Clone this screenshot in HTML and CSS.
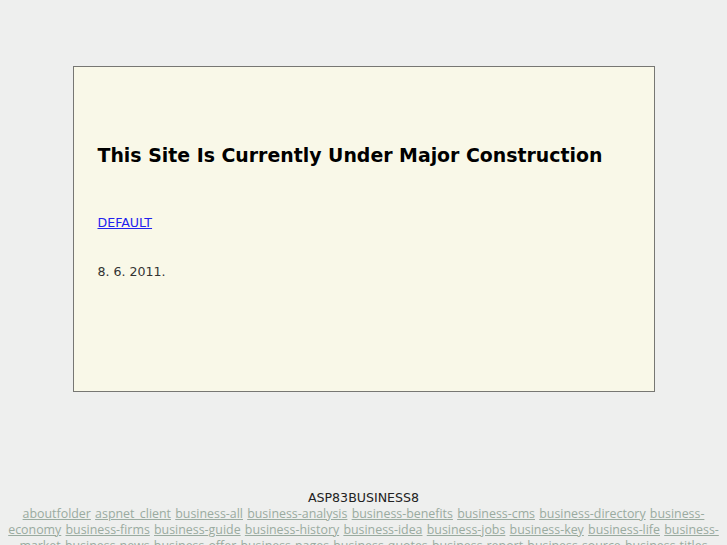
FILE: index.html
```html
<!DOCTYPE html>
<html lang="en">
<head>
    <meta charset="UTF-8">
    <title>ASP83BUSINESS8</title>
    <link rel="stylesheet" href="styles.css">
</head>
<body>
    <div id="box">
        <h1>This Site Is Currently Under Major Construction</h1>
        <p class="link"><a href="#">DEFAULT</a></p>
        <p class="date">8. 6. 2011.</p>
    </div>
    <div id="footer">
        <div class="site">ASP83BUSINESS8</div>
        <div class="folders">
            <a href="#">aboutfolder</a> <a href="#">aspnet_client</a> <a href="#">business-all</a> <a href="#">business-analysis</a> <a href="#">business-benefits</a> <a href="#">business-cms</a> <a href="#">business-directory</a> <a href="#">business-economy</a> <a href="#">business-firms</a> <a href="#">business-guide</a> <a href="#">business-history</a> <a href="#">business-idea</a> <a href="#">business-jobs</a> <a href="#">business-key</a> <a href="#">business-life</a> <a href="#">business-market</a> <a href="#">business-news</a> <a href="#">business-offer</a> <a href="#">business-pages</a> <a href="#">business-quotes</a> <a href="#">business-report</a> <a href="#">business-source</a> <a href="#">business-titles</a> <a href="#">business-tools</a> <a href="#">business-world</a>
        </div>
    </div>
</body>
</html>
```
FILE: styles.css
```css
body {
    margin: 0;
    padding: 0;
    background-color: #eeefee;
    font-family: 'DejaVu Sans', sans-serif;
    color: #000;
}

#box {
    width: 532px;
    height: 324px;
    margin: 66px auto 0 auto;
    padding: 0 24px 0 24px;
    background-color: #f9f8e8;
    border: 1px solid #777773;
    box-sizing: content-box;
}

#box h1 {
    margin: 0;
    padding-top: 76px;
    font-size: 18.9px;
    line-height: 24px;
    font-weight: bold;
}

#box .link {
    margin: 0;
    padding-top: 47px;
    font-size: 12.6px;
    line-height: 18px;
}

#box .link a {
    color: #2222ee;
}

#box .date {
    margin: 0;
    padding-top: 31px;
    font-size: 12.6px;
    line-height: 18px;
    color: #333;
}

#footer {
    margin-top: 98px;
    text-align: center;
    padding: 0 4px;
}

#footer .site {
    font-size: 12.6px;
    line-height: 16px;
    color: #222;
}

#footer .folders {
    font-family: 'Open Sans', sans-serif;
    font-size: 12.4px;
    line-height: 16px;
    word-spacing: 1px;
}

#footer .folders a {
    color: #9aaba0;
}
```
